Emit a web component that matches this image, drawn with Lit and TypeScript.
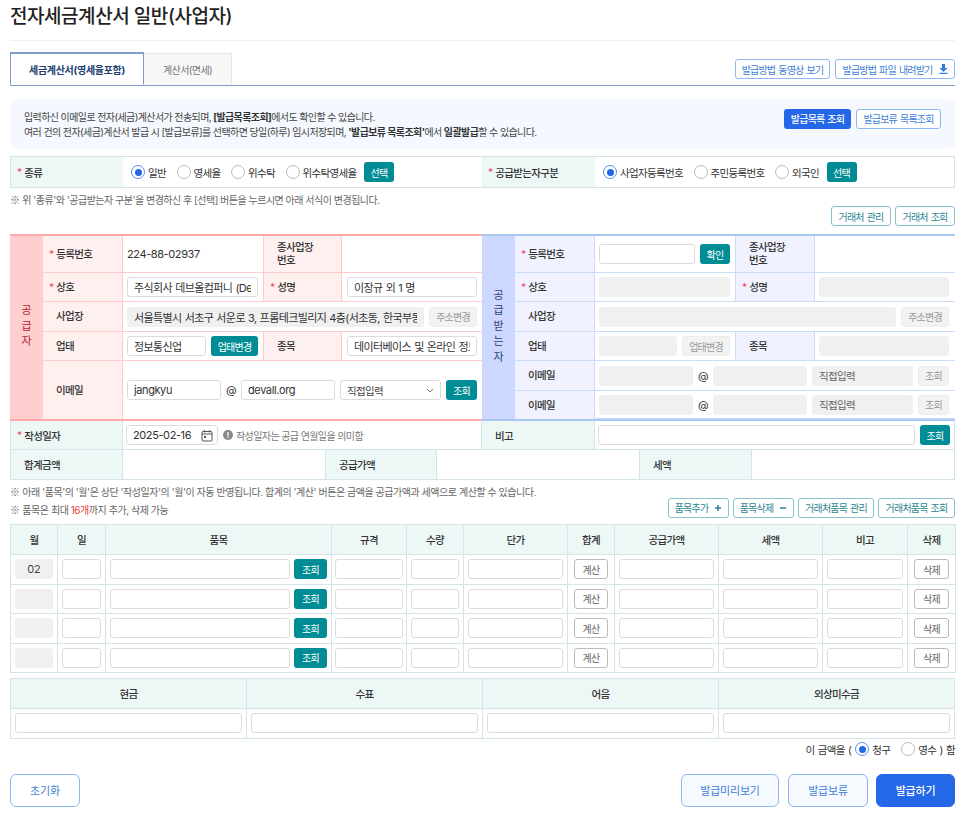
import { LitElement, html, css } from "lit";
import { customElement } from "lit/decorators.js";

@customElement("app-root")
export class AppRoot extends LitElement {
  static styles = css`
    :host { display: block; width: 966px; box-sizing: border-box; padding: 0 11px 0 10px; font-family: Inter, "Noto Sans CJK KR", "Noto Sans", sans-serif; font-size: 10.5px; color: #333; background: #fff; letter-spacing: -0.66px; }
    * { box-sizing: border-box; }
    h1 { margin: 0; height: 41px; padding-top: 4px; font-size: 19px; line-height: 26px; font-weight: 500; color: #222; border-bottom: 1px solid #f0f0f0; letter-spacing: -0.45px; }
    .k { font-family: "Noto Sans CJK KR", sans-serif; letter-spacing: 0; }
    .tabs { display: flex; align-items: flex-end; height: 33px; margin-top: 12px; border-bottom: 1px solid #7f9cc4; }
    .tab { height: 33px; display: flex; align-items: center; justify-content: center; font-size: 10px; }
    .tab.on { width: 134px; background: #fff; border: 1px solid #7f9cc4; border-top-width: 2px; border-bottom: 1px solid #fff; color: #22406f; font-weight: 700; letter-spacing: -0.3px; }
    .tab.off { width: 88px; height: 32px; background: #f7f7f7; border: 1px solid #e6e6e6; border-left: 0; border-bottom: 0; color: #777; letter-spacing: -0.6px; }
    .tab-tools { margin-left: auto; display: flex; gap: 5px; align-self: flex-start; margin-top: 6px; }
    .btn { display: inline-flex; align-items: center; justify-content: center; height: 20px; border-radius: 3px; font-size: 10px; letter-spacing: -0.8px; word-spacing: 1px; white-space: nowrap; flex: none; }
    .b-blue { border: 1px solid #8db8f3; color: #3f7fd8; background: #fff; }
    .b-solid { background: #2468e8; color: #fff; font-weight: 500; }
    .b-teal { background: #008c95; color: #fff; }
    .b-line { border: 1px solid #8cc3d0; color: #2d8594; background: #fff; }
    .b-off { background: #f2f2f2; color: #999; border: 1px solid #ececec; }
    .b-gray { background: #fff; color: #666; border: 1px solid #bbb; }
    .info { margin-top: 13px; height: 50px; background: #f5f9ff; border-radius: 6px; padding: 0 14px; display: flex; justify-content: space-between; font-size: 10px; color: #444; line-height: 15px; letter-spacing: -0.6px; }
    .info .t { padding-top: 11px; }
    .info b { font-weight: 700; color: #333; }
    .info .acts { display: flex; gap: 5px; padding-top: 10px; }
    .sel { margin-top: 7px; height: 32px; display: grid; grid-template-columns: 112px 359px 113px 359px; border: 1px solid #d3e5e9; }
    .lab-g { background: #edf7f6; display: flex; align-items: center; padding-left: 6px; font-weight: 500; color: #333; }
    .lab-g.np { padding-left: 13px; }
    .req { color: #f0506e; margin-right: 2px; font-size: 10px; letter-spacing: 0; }
    .val-g { display: flex; align-items: center; padding-left: 8px; }
    .rad { display: inline-flex; align-items: center; gap: 3px; margin-right: 10.5px; color: #333; }
    .dot { width: 14px; height: 14px; border-radius: 50%; border: 1px solid #bbb; background: #fff; display: inline-block; flex: none; position: relative; }
    .dot.on { border-color: #5c90ee; }
    .dot.on::after { content: ""; position: absolute; left: 2.5px; top: 2.5px; width: 7px; height: 7px; border-radius: 50%; background: #2468e8; }
    .val-g .btn { margin-left: -3px; }
    .note { font-size: 10px; color: #666; line-height: 15px; letter-spacing: -0.5px; }
    .note em { font-style: normal; color: #f03a3a; }
    .n1 { margin-top: 4px; height: 14px; }
    .right { display: flex; justify-content: flex-end; gap: 4px; }
    .party { margin-top: 8px; display: grid; grid-template-columns: 472px 473px; }
    .side { display: grid; border-top: 2px solid; border-bottom: 2px solid; }
    .s { grid-template-columns: 33px 80px 141px 78px 140px; grid-template-rows: 37px 29px 30px 29px 58px; border-color: #ffa9a9; }
    .p { grid-template-columns: 33px 80px 141px 79px 140px; grid-template-rows: 37px 29px 30px 29px 30px 28px; border-color: #a8c8f4; }
    .head { grid-row: 1 / -1; display: flex; flex-direction: column; align-items: center; justify-content: center; font-size: 11px; line-height: 15.5px; letter-spacing: 0; padding-bottom: 2px; }
    .s .head { background: #ffcfcf; color: #b3262e; }
    .p .head { background: #ccd8ff; color: #2c4470; }
    .l { display: flex; align-items: center; padding-left: 13px; font-weight: 500; line-height: 13px; color: #333; }
    .l.r { padding-left: 6px; }
    .s .l { background: #fff0f0; }
    .p .l { background: #f0f3ff; }
    .c { display: flex; align-items: center; gap: 5px; padding: 0 5px 0 4px; min-width: 0; background: #fff; }
    .num { font-size: 11px; letter-spacing: -0.4px; }
    .s .l, .s .c { border-bottom: 1px solid #ffcaca; border-right: 1px solid #ffcaca; }
    .p .l, .p .c { border-bottom: 1px solid #cbdcf9; border-right: 1px solid #cbdcf9; }
    .last { border-right: 0 !important; }
    .s .last { padding: 0 5px; }
    .p .last { padding: 0 6px 0 4px; }
    .wide { grid-column: span 3; }
    .s .wide { padding-left: 4px; }
    .nob { border-bottom: 0 !important; }
    input { font: inherit; font-size: 11px; letter-spacing: -0.6px; word-spacing: 0.6px; color: #333; height: 20px; min-width: 0; width: 100%; flex: 1 1 0; border: 1px solid #dcdcdc; border-radius: 3px; padding: 0 6px; background: #fff; outline: none; }
    input.dis { background: #f0f0f0; border-color: #f0f0f0; }
    input.e { flex: none; width: 94px; letter-spacing: -0.4px; }
    .at { flex: none; width: 10px; text-align: center; font-size: 11px; letter-spacing: 0; }
    .sbox { flex: 1 1 0; min-width: 0; height: 20px; border: 1px solid #dcdcdc; border-radius: 3px; padding: 0 6px; display: flex; align-items: center; justify-content: space-between; color: #444; }
    .sbox.dis { background: #f0f0f0; border-color: #f0f0f0; color: #666; }
    .w30 { width: 30px; } .w48 { width: 48px; } .w31 { width: 31px; } .w47 { width: 47px; } .w33 { width: 33px; } .w34 { width: 34px; } .w35 { width: 35px; }
    .w60 { width: 60px; } .w61 { width: 61px; } .w76 { width: 76px; } .w77 { width: 77px; } .w95 { width: 95px; } .w120 { width: 120px; } .w67 { width: 67px; } .w85 { width: 85px; }
    .row { display: grid; border: 1px solid #d3e5e9; border-top: 0; }
    .r1 { height: 29px; grid-template-columns: 112px 359px 113px 359px; border-bottom: 0; }
    .r2 { height: 30px; grid-template-columns: 112px 203px 111px 203px 112px 202px; }
    .row .lab-g { border-right: 1px solid #d3e5e9; }
    .row .vv { display: flex; align-items: center; gap: 5px; padding: 0 4px 0 3px; border-right: 1px solid #d3e5e9; }
    .row .vv:last-child { border-right: 0; }
    .r1 > * { border-bottom: 1px solid #d3e5e9; }
    .date { width: 92px; height: 20px; border: 1px solid #dcdcdc; border-radius: 3px; display: flex; align-items: center; justify-content: space-between; padding: 0 4px 0 6px; font-size: 11px; letter-spacing: -0.4px; color: #333; flex: none; }
    .hint { display: inline-flex; align-items: center; gap: 3px; font-size: 10px; letter-spacing: -0.6px; color: #777; }
    .n2 { margin-top: 3px; display: grid; height: 41px; line-height: 17px; letter-spacing: -0.46px; }
    .n2 > * { grid-area: 1 / 1; }
    .n2 .right { margin-top: 15px; height: 20px; justify-self: end; }
    .tbl { width: 945px; border-collapse: collapse; table-layout: fixed; border: 1px solid #d3e5e9; margin: 0; }
    .tbl th { background: #edf7f6; font-weight: 500; color: #333; height: 30px; padding: 0; border: 1px solid #d3e5e9; }
    .tbl td { height: 29.5px; padding: 0 4px; border: 1px solid #d3e5e9; }
    .tbl td.tight { padding: 0 3px; }
    .tbl td .in { display: flex; align-items: center; justify-content: center; gap: 4px; }
    .mon { width: 100%; height: 20px; background: #f0f0f0; border-radius: 3px; display: flex; align-items: center; justify-content: center; font-size: 11px; letter-spacing: 0; color: #444; }
    .pay { margin-top: 5px; }
    .amount { display: flex; justify-content: flex-end; align-items: center; height: 21px; color: #333; word-spacing: 1px; }
    .amount .rad { margin: 0 11px 0 4px; }
    .amount .rad.end { margin: 0; }
    .foot { margin-top: 14px; height: 33px; display: flex; gap: 9px; }
    .fb { height: 33px; border-radius: 6px; display: flex; align-items: center; justify-content: center; font-size: 11px; letter-spacing: -0.2px; flex: none; border: 1px solid #8db8f3; color: #3f7fd8; background: #f6faff; }
    .fb.primary { background: #2468e8; color: #fff; border-color: #2468e8; font-weight: 500; margin-left: -1px; }
    .fb.white { background: #fff; margin-right: auto; width: 70px; }
    .w98 { width: 98px; } .w80 { width: 80px; } .w79 { width: 79px; }
    .ic { margin-left: 6px; flex: none; }
  `;

  private radio(label: string, on = false) {
    return html`<span class="rad"><span class="dot ${on ? "on" : ""}"></span>${label}</span>`;
  }
  private reqLabel(t: string) {
    return html`<div class="l r"><span class="req">*</span>${t}</div>`;
  }
  private email() {
    return html`<div class="c wide last">
      <input class="dis e" disabled />
      <span class="at">@</span>
      <input class="dis e" disabled />
      <span class="sbox dis">직접입력</span>
      <span class="btn b-off w31">조회</span>
    </div>`;
  }
  private itemRow(month: string) {
    return html`<tr>
      <td><div class="mon">${month}</div></td>
      <td><input /></td>
      <td><div class="in"><input /><span class="btn b-teal w33">조회</span></div></td>
      <td class="tight"><input /></td>
      <td><input /></td>
      <td><input /></td>
      <td><div class="in"><span class="btn b-gray w34">계산</span></div></td>
      <td><input /></td>
      <td><input /></td>
      <td><input /></td>
      <td><div class="in"><span class="btn b-gray w35">삭제</span></div></td>
    </tr>`;
  }

  render() {
    const widths = [47, 48, 226, 75, 57, 104, 47, 104, 104, 85, 48];
    const heads = ["월", "일", "품목", "규격", "수량", "단가", "합계", "공급가액", "세액", "비고", "삭제"];
    return html`
      <h1>전자세금계산서 일반(사업자)</h1>
      <div class="tabs">
        <div class="tab on">세금계산서(영세율포함)</div>
        <div class="tab off">계산서(면세)</div>
        <div class="tab-tools">
          <span class="btn b-blue w95">발급방법 동영상 보기</span>
          <span class="btn b-blue w120">발급방법 파일 내려받기
            <svg class="ic" width="9" height="10" viewBox="0 0 9 10"><path d="M3 0h3v4h2.5L4.5 8 .5 4H3z M.5 8.8h8V10h-8z" fill="#2f7be0"/></svg>
          </span>
        </div>
      </div>

      <div class="info">
        <div class="t">입력하신 이메일로 전자(세금)계산서가 전송되며, <b>[발급목록조회]</b>에서도 확인할 수 있습니다.<br />
          여러 건의 전자(세금)계산서 발급 시 [발급보류]를 선택하면 당일(하루) 임시저장되며, <b>'발급보류 목록조회'</b>에서 <b>일괄발급</b>할 수 있습니다.</div>
        <div class="acts">
          <span class="btn b-solid w67">발급목록 조회</span>
          <span class="btn b-blue w85">발급보류 목록조회</span>
        </div>
      </div>

      <div class="sel">
        <div class="lab-g"><span class="req">*</span>종류</div>
        <div class="val-g">${this.radio("일반", true)}${this.radio("영세율")}${this.radio("위수탁")}${this.radio("위수탁영세율")}<span class="btn b-teal w30">선택</span></div>
        <div class="lab-g"><span class="req">*</span>공급받는자구분</div>
        <div class="val-g">${this.radio("사업자등록번호", true)}${this.radio("주민등록번호")}${this.radio("외국인")}<span class="btn b-teal w30">선택</span></div>
      </div>
      <div class="note n1"><span class="k">※</span> 위 '종류'와 '공급받는자 구분'을 변경하신 후 [선택] 버튼을 누르시면 아래 서식이 변경됩니다.</div>
      <div class="right">
        <span class="btn b-line w60">거래처 관리</span>
        <span class="btn b-line w60">거래처 조회</span>
      </div>

      <div class="party">
        <div class="side s">
          <div class="head"><span>공</span><span>급</span><span>자</span></div>
          ${this.reqLabel("등록번호")}
          <div class="c num">224-88-02937</div>
          <div class="l">종사업장<br />번호</div>
          <div class="c last"></div>
          ${this.reqLabel("상호")}
          <div class="c"><input value="주식회사 데브올컴퍼니 (DevAll Company)" /></div>
          ${this.reqLabel("성명")}
          <div class="c last"><input value="이장규 외 1 명" /></div>
          <div class="l">사업장</div>
          <div class="c wide last"><input class="dis" disabled value="서울특별시 서초구 서운로 3, 프롬테크빌리지 4층(서초동, 한국부동산원)" /><span class="btn b-off w48">주소변경</span></div>
          <div class="l">업태</div>
          <div class="c"><input value="정보통신업" /><span class="btn b-teal w47">업태변경</span></div>
          <div class="l">종목</div>
          <div class="c last"><input value="데이터베이스 및 온라인 정보 제공업" /></div>
          <div class="l nob">이메일</div>
          <div class="c wide last nob">
            <input class="e" value="jangkyu" />
            <span class="at">@</span>
            <input class="e" value="devall.org" />
            <span class="sbox">직접입력
              <svg width="8" height="5" viewBox="0 0 8 5"><path d="M1 1l3 3 3-3" fill="none" stroke="#777" stroke-width="1"/></svg>
            </span>
            <span class="btn b-teal w31">조회</span>
          </div>
        </div>
        <div class="side p">
          <div class="head"><span>공</span><span>급</span><span>받</span><span>는</span><span>자</span></div>
          ${this.reqLabel("등록번호")}
          <div class="c"><input /><span class="btn b-teal w30">확인</span></div>
          <div class="l">종사업장<br />번호</div>
          <div class="c last"></div>
          ${this.reqLabel("상호")}
          <div class="c"><input class="dis" disabled /></div>
          ${this.reqLabel("성명")}
          <div class="c last"><input class="dis" disabled /></div>
          <div class="l">사업장</div>
          <div class="c wide last"><input class="dis" disabled /><span class="btn b-off w48">주소변경</span></div>
          <div class="l">업태</div>
          <div class="c"><input class="dis" disabled /><span class="btn b-off w48">업태변경</span></div>
          <div class="l">종목</div>
          <div class="c last"><input class="dis" disabled /></div>
          <div class="l">이메일</div>
          ${this.email()}
          <div class="l nob">이메일</div>
          ${this.email()}
        </div>
      </div>

      <div class="row r1">
        <div class="lab-g"><span class="req">*</span>작성일자</div>
        <div class="vv">
          <div class="date">2025-02-16
            <svg width="12" height="13" viewBox="0 0 12 13"><rect x="1" y="2.5" width="10" height="9.5" rx="1" fill="none" stroke="#555"/><path d="M1 5h10M3.5 1v2.5M8.5 1v2.5" stroke="#555" fill="none"/><rect x="3" y="7" width="2" height="2" fill="#555"/></svg>
          </div>
          <span class="hint">
            <svg width="10" height="10" viewBox="0 0 10 10"><circle cx="5" cy="5" r="5" fill="#888"/><rect x="4.3" y="2" width="1.4" height="3.8" fill="#fff"/><rect x="4.3" y="6.6" width="1.4" height="1.4" fill="#fff"/></svg>
            작성일자는 공급 연월일을 의미함</span>
        </div>
        <div class="lab-g np">비고</div>
        <div class="vv"><input /><span class="btn b-teal w30">조회</span></div>
      </div>
      <div class="row r2">
        <div class="lab-g np">합계금액</div><div class="vv"></div>
        <div class="lab-g np">공급가액</div><div class="vv"></div>
        <div class="lab-g np">세액</div><div class="vv"></div>
      </div>

      <div class="note n2">
        <div><span class="k">※</span> 아래 '품목'의 '월'은 상단 '작성일자'의 '월'이 자동 반영됩니다. 합계의 '계산' 버튼은 금액을 공급가액과 세액으로 계산할 수 있습니다.<br />
          <span class="k">※</span> 품목은 최대 <em>16개</em>까지 추가, 삭제 가능</div>
        <div class="right">
          <span class="btn b-line w61">품목추가<svg class="ic" width="8" height="8" viewBox="0 0 8 8"><path d="M4 1v6M1 4h6" stroke="#2d8594" stroke-width="1.5"/></svg></span>
          <span class="btn b-line w61">품목삭제<svg class="ic" width="8" height="8" viewBox="0 0 8 8"><path d="M1 4h6" stroke="#2d8594" stroke-width="1.5"/></svg></span>
          <span class="btn b-line w76">거래처품목 관리</span>
          <span class="btn b-line w77">거래처품목 조회</span>
        </div>
      </div>

      <table class="tbl">
        <colgroup>${widths.map((w) => html`<col style="width:${w}px" />`)}</colgroup>
        <thead><tr>${heads.map((h) => html`<th>${h}</th>`)}</tr></thead>
        <tbody>${["02", "", "", ""].map((m) => this.itemRow(m))}</tbody>
      </table>

      <table class="tbl pay">
        <thead><tr><th>현금</th><th>수표</th><th>어음</th><th>외상미수금</th></tr></thead>
        <tbody><tr><td><input /></td><td><input /></td><td><input /></td><td><input /></td></tr></tbody>
      </table>

      <div class="amount">이 금액을 ( <span class="rad"><span class="dot on"></span>청구</span><span class="rad end"><span class="dot"></span>영수 ) 함</span></div>

      <div class="foot">
        <div class="fb white">초기화</div>
        <div class="fb w98">발급미리보기</div>
        <div class="fb w80">발급보류</div>
        <div class="fb primary w79">발급하기</div>
      </div>
    `;
  }
}
